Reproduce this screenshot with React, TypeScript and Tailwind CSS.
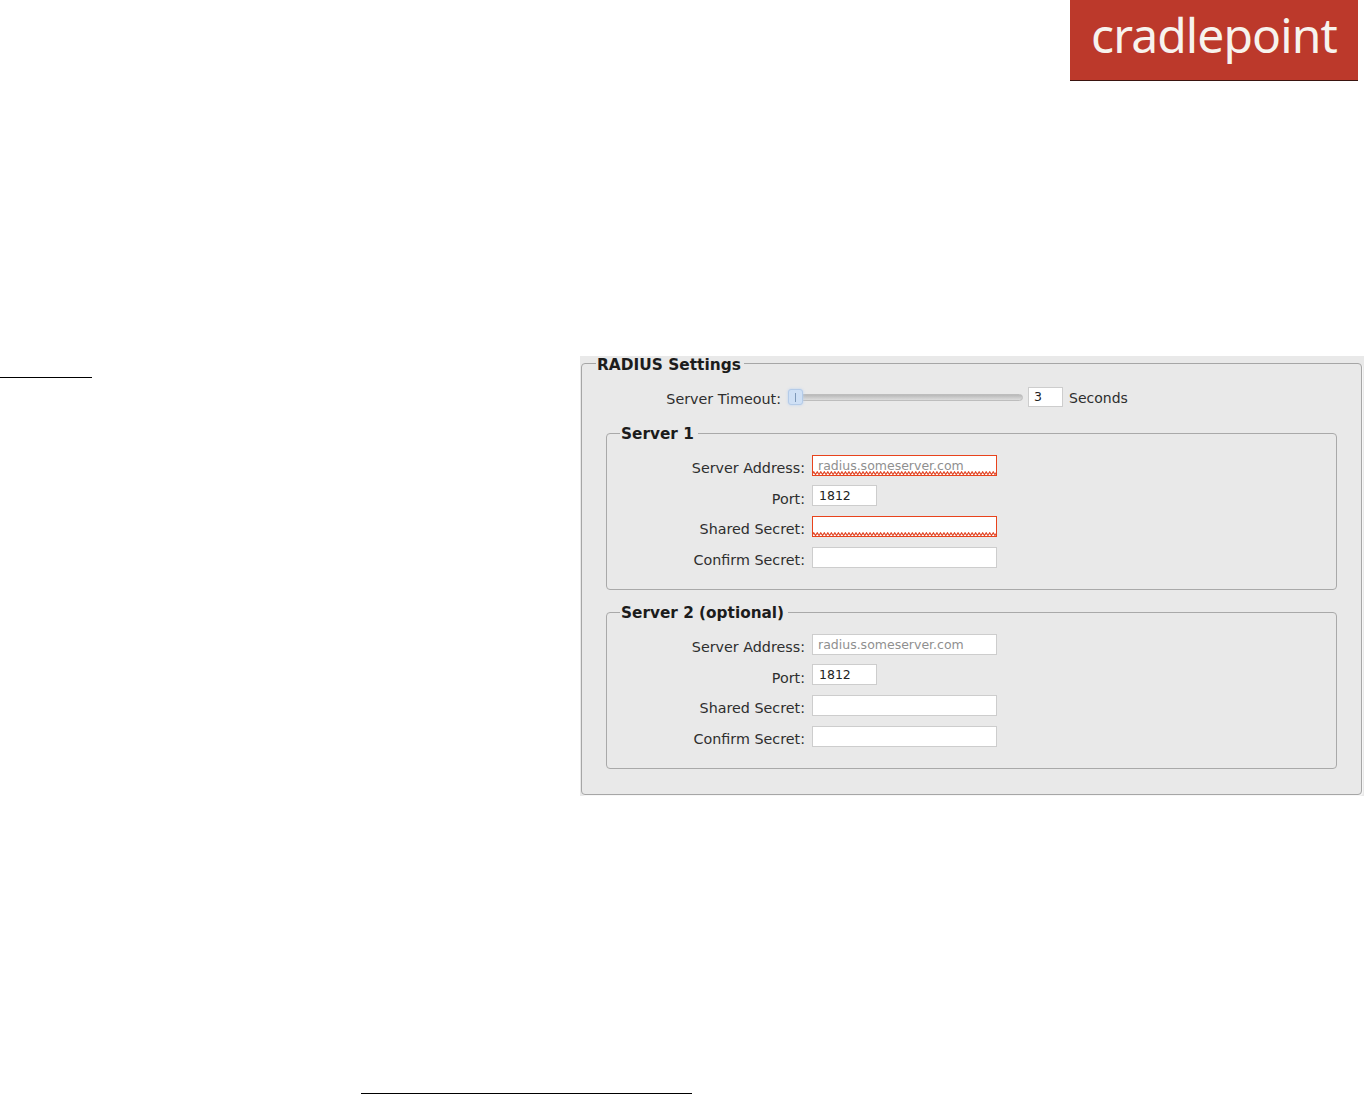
const uiFont = { fontFamily: '"DejaVu Sans", sans-serif' }

function Squiggle() {
  // red wavy spell-check line along the bottom of an invalid field
  const points: string[] = []
  for (let x = 0; x <= 184; x += 1.75) {
    points.push(`${x},${Math.round(x / 1.75) % 2 === 0 ? 3.5 : 0.8}`)
  }
  return (
    <svg className="absolute left-0 bottom-0 w-full h-[5px]" viewBox="0 0 184 5" preserveAspectRatio="none">
      <polyline points={points.join(' ')} fill="none" stroke="#e2492a" strokeWidth="1.2" />
    </svg>
  )
}

function Field({
  label,
  value,
  placeholder,
  short,
  invalid,
  rowClass,
  labelClass
}: {
  label: string
  value?: string
  placeholder?: string
  short?: boolean
  invalid?: boolean
  rowClass: string
  labelClass: string
}) {
  return (
    <div className={`flex items-start ${rowClass}`}>
      <label className={`w-[199px] pr-[7px] text-right text-[14.3px] leading-[20px] text-[#2e2e2e] whitespace-nowrap ${labelClass}`}>
        {label}
      </label>
      <div className={`relative h-[21px] ${short ? 'w-[65px]' : 'w-[185px]'}`}>
        <input
          readOnly
          defaultValue={value}
          placeholder={placeholder}
          className={`block w-full h-full bg-white pr-[5px] pb-[1px] text-[12.5px] text-[#222] placeholder:text-[#8f8f8f] outline-none border ${
            short ? 'pl-[6px]' : 'pl-[5px]'
          } ${invalid ? 'border-[#e8431c]' : 'border-[#cdcdcd]'}`}
        />
        {invalid && <Squiggle />}
      </div>
    </div>
  )
}

function ServerGroup({ title, invalid, className }: { title: string; invalid?: boolean; className: string }) {
  return (
    <fieldset className={`border border-[#a9a9a9] rounded-[4px] pl-[6px] pb-[11px] ${className}`}>
      <legend className="ml-[7px] pl-[1px] pr-[4px] h-[20px] text-[15.3px] leading-[22px] font-bold text-[#1c1c1c]">
        {title}
      </legend>
      <div className="pt-[12px]">
        <Field label="Server Address:" placeholder="radius.someserver.com" invalid={invalid} rowClass="h-[30px]" labelClass="pt-[3px]" />
        <Field label="Port:" value="1812" short rowClass="h-[31px]" labelClass="pt-[4px]" />
        <Field label="Shared Secret:" invalid={invalid} rowClass="h-[31px]" labelClass="pt-[3px]" />
        <Field label="Confirm Secret:" rowClass="h-[31px]" labelClass="pt-[3px]" />
      </div>
    </fieldset>
  )
}

export default function App() {
  return (
    <div className="relative w-[1364px] h-[1094px] bg-white overflow-hidden" style={uiFont}>
      {/* header logo */}
      <div className="flex justify-end pr-[6px]">
        <div className="w-[288px] h-[81px] bg-[#bc392b] border-b border-[#3a1410] flex justify-center">
          <span
            className="mt-[1px] text-[48px] leading-[68px] text-[#f7f3ee] tracking-[-0.9px]"
            style={{ fontFamily: '"Noto Sans", sans-serif', fontWeight: 400 }}
          >
            cradlepoint
          </span>
        </div>
      </div>

      <div className="flex items-start mt-[275px]">
        <div className="w-[580px] pt-[21px]">
          <div className="w-[92px] h-px bg-black" />
        </div>

        {/* settings panel */}
        <div className="w-[784px] h-[440px] bg-[#e9e9e9] px-[1px]">
          <fieldset className="border border-[#a6a6a6] rounded-[4px] w-[781px] h-[439px] shadow-[1px_1px_0_#f7f7f7]">
            <legend className="ml-[14px] pl-[1px] pr-[3px] h-[14px] text-[15.4px] leading-[18px] font-bold text-[#1c1c1c]">
              RADIUS Settings
            </legend>

            <div className="flex items-start h-[27px] mt-[17px]">
              <label className="w-[199px] pt-[2px] text-right text-[14.3px] leading-[20px] text-[#2e2e2e] whitespace-nowrap">
                Server Timeout:
              </label>
              <div className="relative ml-[7px] w-[235px] h-[20px]">
                <div className="absolute left-0 right-0 top-[7px] h-[7px] rounded-full bg-linear-to-b from-[#b9b9b9] to-[#dddddd] border border-[#bdbdbd]" />
                <div className="absolute left-0 top-[2px] w-[15px] h-[16px] rounded-[3px] bg-[#cfe0f5] border border-[#b4cbe8] shadow-[0_0_3px_#bcd3f0] flex items-center justify-center">
                  <div className="w-px h-[9px] bg-[#7f99b8]" />
                </div>
              </div>
              <input
                readOnly
                defaultValue="3"
                className="block ml-[5px] w-[35px] h-[20px] bg-white border border-[#cdcdcd] px-[5px] pb-[2px] text-[12.5px] text-[#222] outline-none"
              />
              <span className="ml-[6px] pt-[1px] text-[14px] leading-[20px] text-[#2e2e2e]">Seconds</span>
            </div>

            <ServerGroup title="Server 1" invalid className="ml-[24px] w-[731px] h-[167px] mt-[9px]" />
            <ServerGroup title="Server 2 (optional)" className="ml-[24px] w-[731px] h-[167px] mt-[12px]" />
          </fieldset>
        </div>
      </div>

      {/* footnote rule */}
      <div className="absolute left-[361px] bottom-0 w-[331px] h-px bg-black" />
    </div>
  )
}
